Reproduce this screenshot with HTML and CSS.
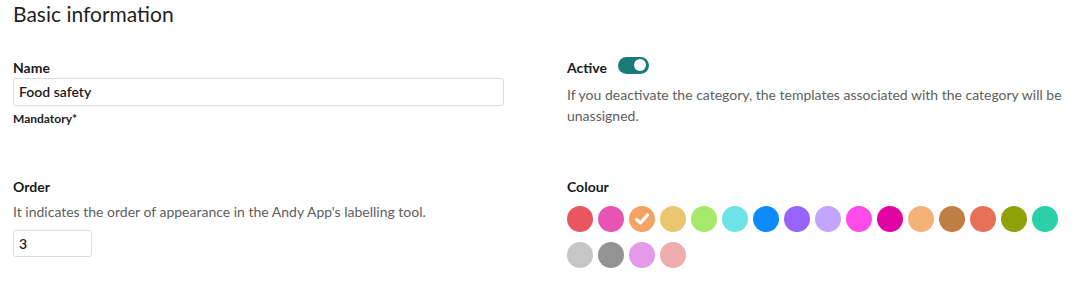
FILE: index.html
```html
<!DOCTYPE html>
<html>
<head>
<meta charset="utf-8">
<link rel="stylesheet" href="styles.css">
</head>
<body>
<div class="page">
  <h2 class="title">Basic information</h2>
  <div class="grid">
    <div class="field">
      <div class="label">Name</div>
      <div class="input wide">Food safety</div>
      <div class="hint">Mandatory*</div>
    </div>
    <div class="field">
      <div class="label-row">
        <div class="label">Active</div>
        <div class="toggle"><span class="knob"></span></div>
      </div>
      <div class="desc desc-active">If you deactivate the category, the templates associated with the category will be unassigned.</div>
    </div>
    <div class="field">
      <div class="label">Order</div>
      <div class="desc">It indicates the order of appearance in the Andy App's labelling tool.</div>
      <div class="input small">3</div>
    </div>
    <div class="field">
      <div class="label">Colour</div>
      <div class="swatches">
        <span class="sw" style="background:#e8555f"></span>
        <span class="sw" style="background:#e754b4"></span>
        <span class="sw" style="background:#f3a462"><svg viewBox="0 0 26 26" width="26" height="26"><path d="M7.5 13.5 L11.5 17 L18.5 9" fill="none" stroke="#fff" stroke-width="3.2" stroke-linecap="round" stroke-linejoin="round"/></svg></span>
        <span class="sw" style="background:#eac46e"></span>
        <span class="sw" style="background:#a4e96a"></span>
        <span class="sw" style="background:#6de3e8"></span>
        <span class="sw" style="background:#0c8bfe"></span>
        <span class="sw" style="background:#9663fc"></span>
        <span class="sw" style="background:#c3a5fd"></span>
        <span class="sw" style="background:#fd4ce9"></span>
        <span class="sw" style="background:#e203a4"></span>
        <span class="sw" style="background:#f4b278"></span>
        <span class="sw" style="background:#c07e44"></span>
        <span class="sw" style="background:#e87056"></span>
        <span class="sw" style="background:#90a10a"></span>
        <span class="sw" style="background:#2ccfa8"></span>
        <span class="sw" style="background:#c6c6c6"></span>
        <span class="sw" style="background:#939393"></span>
        <span class="sw" style="background:#e49ae8"></span>
        <span class="sw" style="background:#f0adad"></span>
      </div>
    </div>
  </div>
</div>
</body>
</html>
```
FILE: styles.css
```css
* { box-sizing: border-box; }
body {
  margin: 0;
  background: #fff;
  font-family: Lato, "Liberation Sans", sans-serif;
  color: #1c1c1c;
}
.page {
  padding: 0 13px;
}
.title {
  margin: 0;
  padding-top: 0;
  font-size: 21px;
  line-height: 27px;
  font-weight: 400;
  color: #1f1f1f;
}
.grid {
  display: grid;
  grid-template-columns: 491px 1fr;
  column-gap: 63px;
  row-gap: 0;
  margin-top: 32px;
}
.field {
  display: flex;
  flex-direction: column;
  align-items: flex-start;
}
.field:nth-child(1), .field:nth-child(2) {
  height: 119px;
}
.label {
  font-size: 14px;
  font-weight: 700;
  line-height: 18px;
  color: #1a1a1a;
}
.label-row {
  display: flex;
  align-items: center;
  gap: 11px;
}
.toggle {
  width: 31px;
  height: 17px;
  border-radius: 9px;
  background: #1a7a78;
  display: flex;
  align-items: center;
  justify-content: flex-end;
  padding: 0 3px;
  margin-top: -6px;
}
.knob {
  width: 12px;
  height: 12px;
  border-radius: 50%;
  background: #fff;
}
.input {
  border: 1px solid #dcdcdc;
  border-radius: 3px;
  font-size: 14px;
  line-height: 18px;
  padding: 4px 5px;
  color: #1a1a1a;
  font-weight: 600;
}
.input.wide {
  width: 491px;
  height: 28px;
  margin-top: 1px;
}
.input.small {
  width: 79px;
  height: 27px;
  margin-top: 8px;
}
.hint {
  font-size: 12px;
  font-weight: 700;
  line-height: 14px;
  margin-top: 6px;
  color: #222;
}
.desc {
  font-size: 14px;
  line-height: 21px;
  color: #5e5e5e;
  margin-top: 5px;
}
.desc-active {
  margin-top: 7px;
}
.swatches {
  display: flex;
  flex-wrap: wrap;
  gap: 10px 5px;
  margin-top: 10px;
  width: 500px;
}
.sw {
  width: 26px;
  height: 26px;
  border-radius: 50%;
  display: block;
}
.sw svg { display: block; }
```
